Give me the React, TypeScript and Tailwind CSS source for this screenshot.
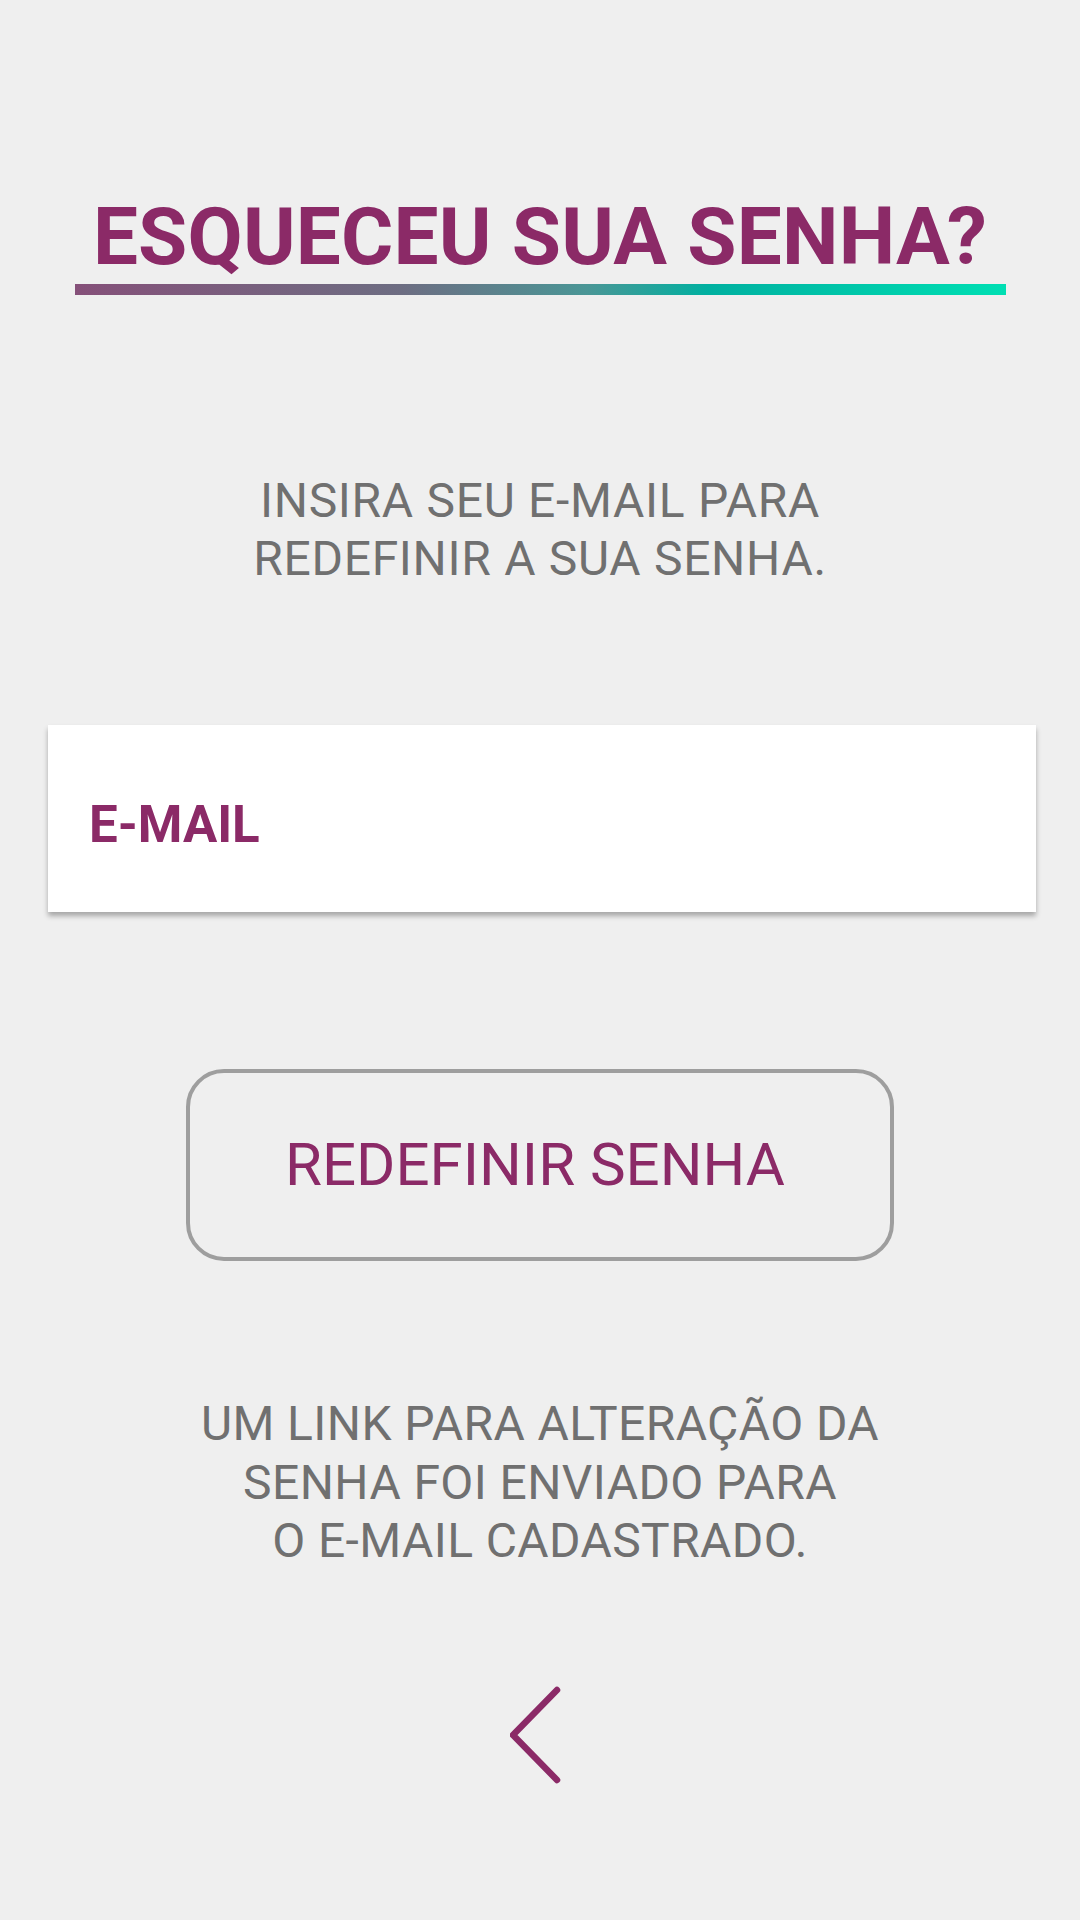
import React from "react";

const purple = "text-[#8b2a67]";

const BackChevron = () => (
  <svg width="60" height="100" viewBox="0 0 60 100" fill="none">
    <path
      d="M47 5 L3 50 L47 95"
      stroke="#8b2a67"
      strokeWidth="6.5"
      strokeLinecap="round"
      strokeLinejoin="round"
    />
  </svg>
);

const App = () => {
  return (
    <div className="min-h-[1920px] w-[1080px] bg-[#efefef] pt-[197px] font-['Roboto','Liberation_Sans',sans-serif]">
      {/* header */}
      <h1 className={`text-center text-[80px] leading-[80px] font-bold tracking-[0.2px] ${purple}`}>
        ESQUECEU SUA SENHA?
      </h1>
      <div className="mx-auto mt-[7px] h-[11px] w-[931px] bg-[linear-gradient(90deg,#855079_0%,#6d6d82_35%,#4a9696_55%,#00b0a0_68%,#00dfb3_100%)]" />

      <p className="mt-[177px] text-center text-[48px] leading-[58px] tracking-[0.7px] text-[#707070]">
        INSIRA SEU E-MAIL PARA
        <br />
        REDEFINIR A SUA SENHA.
      </p>

      {/* email field */}
      <div className="mt-[137px] ml-[48px] h-[187px] w-[988px] bg-white pt-[74px] pl-[41px] shadow-[0_4px_5px_rgba(0,0,0,0.3)]">
        <span className={`block text-[51px] leading-[51px] font-bold ${purple}`}>E-MAIL</span>
      </div>

      {/* button */}
      <button className="mx-auto mt-[157px] flex h-[192px] w-[708px] items-center justify-center rounded-[38px] border-4 border-[#9e9e9e] pr-[10px]">
        <span className={`text-[60px] leading-[60px] ${purple}`}>REDEFINIR SENHA</span>
      </button>

      <p className="mt-[134px] text-center text-[48px] leading-[58.5px] tracking-[0.4px] text-[#707070]">
        UM LINK PARA ALTERAÇÃO DA
        <br />
        SENHA FOI ENVIADO PARA
        <br />O E-MAIL CADASTRADO.
      </p>

      <div className="mt-[114px] flex justify-center">
        <BackChevron />
      </div>
    </div>
  );
};

export default App;
